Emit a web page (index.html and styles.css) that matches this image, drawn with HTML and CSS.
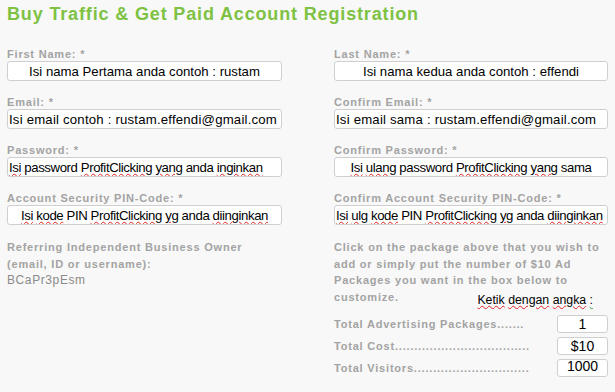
FILE: index.html
```html
<!DOCTYPE html>
<html>
<head>
<meta charset="utf-8">
<link rel="stylesheet" href="styles.css">
</head>
<body>
<div class="page">
  <h1 class="title">Buy Traffic &amp; Get Paid Account Registration</h1>
  <div class="form">
    <div class="field">
      <div class="label">First Name: *</div>
      <div class="box center">Isi nama Pertama anda contoh : rustam</div>
    </div>
    <div class="field">
      <div class="label">Last Name: *</div>
      <div class="box center">Isi nama kedua anda contoh : effendi</div>
    </div>
    <div class="field">
      <div class="label">Email: *</div>
      <div class="box wide">Isi email contoh : rustam.effendi@gmail.com</div>
    </div>
    <div class="field">
      <div class="label">Confirm Email: *</div>
      <div class="box wide">Isi email sama : rustam.effendi@gmail.com</div>
    </div>
    <div class="field">
      <div class="label">Password: *</div>
      <div class="box tight"><span class="sp">Isi</span> password <span class="sp">ProfitClicking</span> <span class="sp">yang</span> anda <span class="sp">inginkan</span></div>
    </div>
    <div class="field">
      <div class="label">Confirm Password: *</div>
      <div class="box center tight"><span class="sp">Isi</span> <span class="sp">ulang</span> password <span class="sp">ProfitClicking</span> <span class="sp">yang</span> sama</div>
    </div>
    <div class="field">
      <div class="label">Account Security PIN-Code: *</div>
      <div class="box center tight"><span class="sp">Isi</span> <span class="sp">kode</span> PIN <span class="sp">ProfitClicking</span> <span class="sp">yg</span> anda <span class="sp">diinginkan</span></div>
    </div>
    <div class="field">
      <div class="label">Confirm Account Security PIN-Code: *</div>
      <div class="box tight"><span class="sp">Isi</span> <span class="sp">ulg</span> <span class="sp">kode</span> PIN <span class="sp">ProfitClicking</span> <span class="sp">yg</span> anda <span class="sp">diinginkan</span></div>
    </div>
    <div class="field free">
      <div class="para">Referring Independent Business Owner<br>(email, ID or username):</div>
      <div class="ref">BCaPr3pEsm</div>
    </div>
    <div class="field free">
      <div class="para">Click on the package above that you wish to<br>add or simply put the number of $10 Ad<br>Packages you want in the box below to</div>
      <div class="lastline">
        <span class="para">customize.</span>
        <span class="hint"><span class="sp">Ketik</span> <span class="sp">dengan</span> <span class="sp">angka</span> <span class="spg">:</span></span>
      </div>
      <div class="totals">
        <div class="trow"><span class="tlabel">Total Advertising Packages.......</span><span class="sbox">1</span></div>
        <div class="trow"><span class="tlabel">Total Cost...................................</span><span class="sbox">$10</span></div>
        <div class="trow"><span class="tlabel">Total Visitors..............................</span><span class="sbox high">1000</span></div>
      </div>
    </div>
  </div>
</div>
</body>
</html>
```
FILE: styles.css
```css
html, body {
  margin: 0;
  padding: 0;
  background: #f8f8f8;
}
.page {
  padding: 4px 7px 0 7px;
  font-family: "Liberation Sans", Arial, sans-serif;
}
.title {
  margin: 0;
  font-size: 18px;
  line-height: 21px;
  font-weight: bold;
  color: #7dc242;
  letter-spacing: 0.85px;
}
.form {
  display: grid;
  grid-template-columns: 275px 274px;
  column-gap: 52px;
  margin-top: 23px;
}
.field {
  display: flex;
  flex-direction: column;
  height: 48px;
}
.field.free {
  height: auto;
  margin-top: -1px;
}
.label {
  font-size: 11px;
  line-height: 13px;
  font-weight: bold;
  color: #a3a3a3;
  height: 13px;
  letter-spacing: 0.8px;
}
.box {
  box-sizing: border-box;
  height: 20px;
  background: #fff;
  border: 1px solid #cfcfcf;
  border-radius: 3px;
  font-size: 13.2px;
  line-height: 18px;
  color: #000;
  padding: 1px 1px 0 1px;
  white-space: nowrap;
  overflow: hidden;
}
.box.center {
  text-align: center;
}
.box.wide {
  letter-spacing: 0.2px;
}
.box.tight {
  letter-spacing: -0.4px;
}
.sp {
  text-decoration: underline wavy #e0201f;
  text-decoration-thickness: 1px;
  text-underline-offset: 1px;
}
.spg {
  text-decoration: underline wavy #3ca03c;
  text-decoration-thickness: 1px;
  text-underline-offset: 1px;
}
.para {
  font-size: 11px;
  line-height: 16.5px;
  font-weight: bold;
  color: #a3a3a3;
  letter-spacing: 0.8px;
}
.ref {
  font-size: 12px;
  line-height: 16px;
  color: #8a8a8a;
  letter-spacing: 0.6px;
}
.lastline {
  display: flex;
  justify-content: space-between;
  padding-right: 15px;
}
.hint {
  font-size: 12.3px;
  line-height: 16px;
  color: #000;
  padding-top: 3px;
}
.totals {
  display: flex;
  flex-direction: column;
  gap: 4px;
  margin-top: 7px;
}
.trow {
  display: flex;
  justify-content: space-between;
  align-items: center;
}
.tlabel {
  font-size: 11px;
  font-weight: bold;
  color: #a3a3a3;
  letter-spacing: 0.8px;
}
.sbox {
  box-sizing: border-box;
  width: 51px;
  height: 18px;
  background: #fff;
  border: 1px solid #cfcfcf;
  border-radius: 3px;
  font-size: 14px;
  line-height: 16px;
  text-align: center;
  color: #000;
}
.sbox.high {
  line-height: 13px;
}
```
